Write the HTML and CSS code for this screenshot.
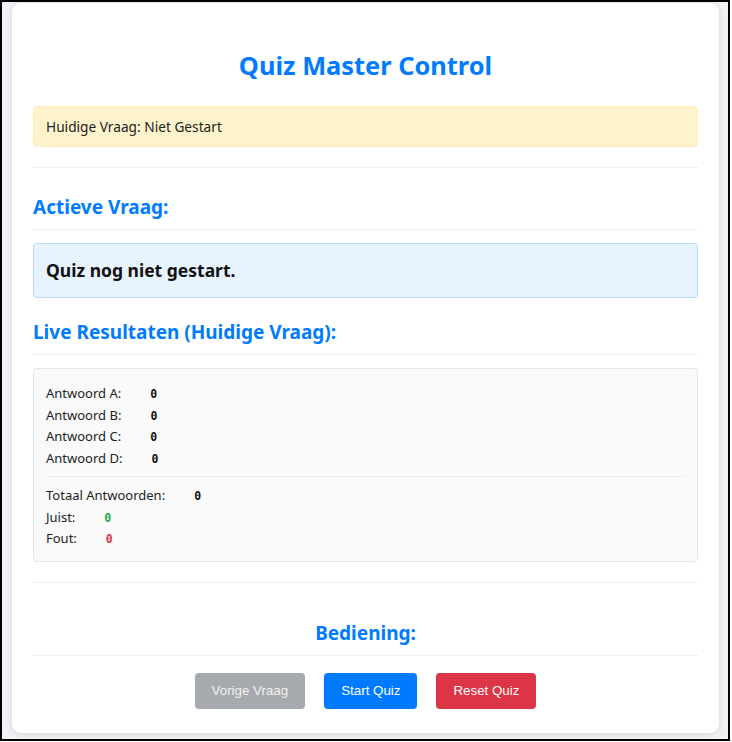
FILE: index.html
```html
<!DOCTYPE html>
<html lang="nl">
<head>
<meta charset="utf-8">
<title>Quiz Master Control</title>
<link rel="stylesheet" href="styles.css">
</head>
<body>
<div class="frame">
  <main class="card">
    <h1 class="title">Quiz Master Control</h1>
    <div class="status">Huidige Vraag: Niet Gestart</div>
    <hr class="sep sep-top">
    <h2 class="section">Actieve Vraag:</h2>
    <div class="question">Quiz nog niet gestart.</div>
    <h2 class="section section-live">Live Resultaten (Huidige Vraag):</h2>
    <div class="results">
      <div class="row"><span class="label">Antwoord A:</span><span class="val">0</span></div>
      <div class="row"><span class="label">Antwoord B:</span><span class="val">0</span></div>
      <div class="row"><span class="label">Antwoord C:</span><span class="val">0</span></div>
      <div class="row"><span class="label">Antwoord D:</span><span class="val">0</span></div>
      <hr class="inner-sep">
      <div class="row"><span class="label">Totaal Antwoorden:</span><span class="val">0</span></div>
      <div class="row"><span class="label">Juist:</span><span class="val val-ok">0</span></div>
      <div class="row"><span class="label">Fout:</span><span class="val val-bad">0</span></div>
    </div>
    <hr class="sep sep-bottom">
    <h2 class="section section-center">Bediening:</h2>
    <div class="controls">
      <button class="btn btn-prev" disabled>Vorige Vraag</button>
      <button class="btn btn-start">Start Quiz</button>
      <button class="btn btn-reset">Reset Quiz</button>
    </div>
  </main>
</div>
</body>
</html>
```
FILE: styles.css
```css
html, body {
  margin: 0;
  padding: 0;
  background: #ffffff;
}
body {
  font-family: "Noto Sans", "Open Sans", sans-serif;
  color: #222;
}
.frame {
  width: 730px;
  height: 741px;
  box-sizing: border-box;
  border: 2px solid #000;
  background: #f0f2f5;
  padding: 1px 9px 0 10px;
  overflow: hidden;
}
.card {
  background: #fff;
  border-radius: 9px;
  box-shadow: 0 1px 6px rgba(0, 0, 0, 0.12);
  padding: 24px 21px 24px 21px;
  height: 730px;
  box-sizing: border-box;
}
.title {
  margin: 21px 0 24px;
  text-align: center;
  color: #007bff;
  font-size: 25.4px;
  line-height: 34px;
  font-weight: 700;
}
.status {
  background: #fff3cd;
  border: 1px solid #ffeeba;
  border-radius: 4px;
  padding: 11px 12px;
  font-size: 13.7px;
  line-height: 17px;
  color: #222;
}
.sep {
  border: 0;
  border-top: 1px solid #eeeeee;
  margin: 20px 0 0;
}
.section {
  color: #007bff;
  font-size: 19px;
  line-height: 24px;
  font-weight: 700;
  margin: 27px 0 13px;
  padding-bottom: 10px;
  border-bottom: 1px solid #eeeeee;
}
.section-live {
  margin-top: 22px;
}
.section-center {
  text-align: center;
  margin-top: 38px;
  margin-bottom: 17px;
}
.question {
  background: #e7f3ff;
  border: 1px solid #b8daff;
  border-radius: 4px;
  padding: 15px 12px;
  font-size: 17.5px;
  line-height: 23px;
  font-weight: 700;
  color: #111;
}
.results {
  background: #fafafa;
  border: 1px solid #e6e6e6;
  border-radius: 4px;
  padding: 14px 12px 11px;
}
.row {
  height: 21.5px;
  font-size: 13px;
  line-height: 21.5px;
  white-space: nowrap;
}
.label {
  color: #222;
}
.val {
  margin-left: 29px;
  font-family: "DejaVu Sans Mono", monospace;
  font-size: 11.5px;
  line-height: 1;
  font-weight: 700;
  color: #111;
}
.val-ok { color: #28a745; }
.val-bad { color: #dc3545; }
.inner-sep {
  border: 0;
  border-top: 1px solid #eeeeee;
  margin: 7px 0 8px;
}
.sep-bottom {
  margin-top: 20px;
}
.controls {
  display: flex;
  justify-content: center;
  gap: 19px;
}
.btn {
  font-family: "Liberation Sans", Arial, sans-serif;
  font-size: 13.333px;
  height: 36px;
  padding: 0 17px;
  border: 0;
  border-radius: 4px;
  color: #fff;
  cursor: pointer;
}
.btn-prev {
  background: #a6a9ad;
  color: #f1f1f1;
}
.btn-start {
  background: #007bff;
}
.btn-reset {
  background: #dc3545;
}
```
